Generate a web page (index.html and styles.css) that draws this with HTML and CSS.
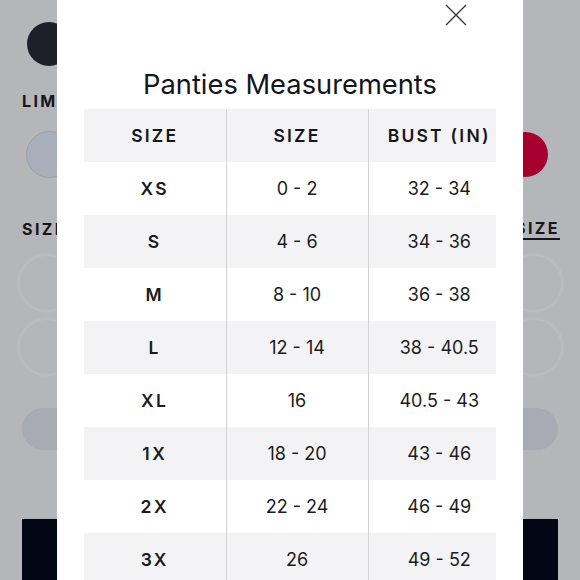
FILE: index.html
```html
<!DOCTYPE html>
<html>
<head>
<meta charset="utf-8">
<link rel="stylesheet" href="styles.css">
</head>
<body>
<div class="page">
  <div class="swatch-row">
    <span class="sw sw-dark"></span>
  </div>
  <div class="label">LIMITED</div>
  <div class="swatch-row two">
    <span class="sw sw-light"></span>
    <span class="sw sw-red"></span>
  </div>
  <div class="label-row">
    <span class="label">SIZE</span>
    <span class="label link">SIZE</span>
  </div>
  <div class="size-row"><span class="sz"></span><span class="sz"></span></div>
  <div class="size-row second"><span class="sz"></span><span class="sz"></span></div>
  <div class="pill"></div>
  <div class="cta"></div>
</div>

<div class="modal">
  <div class="modal-top">
    <svg class="close" width="22" height="22" viewBox="0 0 22 22"><path d="M1 1 L21 21 M21 1 L1 21" stroke="#3a3a3f" stroke-width="1.4" fill="none"/></svg>
  </div>
  <h1 class="title">Panties Measurements</h1>
  <div class="table-wrap">
    <table class="chart">
      <thead>
        <tr><th>SIZE</th><th>SIZE</th><th>BUST (IN)</th></tr>
      </thead>
      <tbody>
        <tr><td class="sz-name">XS</td><td>0 - 2</td><td>32 - 34</td></tr>
        <tr><td class="sz-name">S</td><td>4 - 6</td><td>34 - 36</td></tr>
        <tr><td class="sz-name">M</td><td>8 - 10</td><td>36 - 38</td></tr>
        <tr><td class="sz-name">L</td><td>12 - 14</td><td>38 - 40.5</td></tr>
        <tr><td class="sz-name">XL</td><td>16</td><td>40.5 - 43</td></tr>
        <tr><td class="sz-name">1X</td><td>18 - 20</td><td>43 - 46</td></tr>
        <tr><td class="sz-name">2X</td><td>22 - 24</td><td>46 - 49</td></tr>
        <tr><td class="sz-name">3X</td><td>26</td><td>49 - 52</td></tr>
      </tbody>
    </table>
  </div>
</div>
</body>
</html>
```

FILE: styles.css
```css
html, body {
  margin: 0;
  padding: 0;
  height: 100%;
  overflow: hidden;
}
body {
  background: #b5b6ba;
  font-family: Inter, "Noto Sans", sans-serif;
  color: #16171c;
}
.page {
  padding: 22px 22px 0 22px;
  display: flex;
  flex-direction: column;
}
.swatch-row {
  display: flex;
  justify-content: space-between;
  align-items: center;
  padding-left: 5px;
  height: 44px;
}
.swatch-row.two {
  margin-top: 20px;
  height: 47px;
  padding-left: 4px;
  padding-right: 10px;
}
.sw {
  display: block;
  border-radius: 50%;
  box-sizing: border-box;
}
.sw-dark {
  width: 44px;
  height: 44px;
  background: #1d2028;
}
.sw-light {
  width: 47px;
  height: 47px;
  background: #a9aebb;
  border: 1px solid #9aa0ab;
}
.sw-red {
  width: 45px;
  height: 45px;
  background: #a6002f;
}
.label {
  font-size: 16px;
  line-height: 20px;
  font-weight: 700;
  letter-spacing: 2.4px;
  color: #16171c;
}
.page > .label {
  margin-top: 25px;
}
.label-row {
  margin-top: 41px;
  display: flex;
  justify-content: space-between;
  align-items: flex-start;
}
.link {
  letter-spacing: 2.4px;
  border-bottom: 2px solid #16171c;
  line-height: 19px;
  margin-right: -2px;
}
.size-row {
  margin-top: 14px;
  display: flex;
  justify-content: space-between;
  margin-left: -4px;
  margin-right: -5px;
}
.size-row.second {
  margin-top: 6px;
}
.sz {
  display: block;
  width: 58px;
  height: 58px;
  border-radius: 50%;
  box-sizing: border-box;
  border: 2px solid #bbbcc0;
  background: #b5b6ba;
  box-shadow: 0 0 3px rgba(255,255,255,0.15);
}
.pill {
  margin-top: 32px;
  height: 42px;
  border-radius: 21px;
  background: #a8abb3;
}
.cta {
  margin-top: 69px;
  height: 80px;
  background: #030614;
}

.modal {
  position: fixed;
  top: 0;
  left: 57px;
  width: 466px;
  height: 100%;
  background: #ffffff;
  box-sizing: border-box;
  padding: 4px 27px 0 27px;
}
.modal-top {
  display: flex;
  justify-content: flex-end;
  padding-right: 29px;
  height: 22px;
}
.close {
  display: block;
}
.title {
  margin: 43px 0 0 0;
  text-align: center;
  font-size: 27.3px;
  line-height: 32px;
  font-weight: 400;
  color: #141519;
  letter-spacing: 0;
}
.table-wrap {
  margin-top: 8px;
  width: 412px;
  overflow: hidden;
}
.chart {
  width: 426px;
  border-collapse: collapse;
  table-layout: fixed;
}
.chart th, .chart td {
  height: 53px;
  padding: 0;
  text-align: center;
  vertical-align: middle;
  box-sizing: border-box;
}
.chart th + th, .chart td + td {
  border-left: 1px solid #d3d3d7;
}
.chart thead tr {
  background: #f3f3f5;
}
.chart tbody tr:nth-child(even) {
  background: #f3f3f5;
}
.chart th {
  font-size: 17.5px;
  font-weight: 600;
  letter-spacing: 2.2px;
  color: #16171c;
}
.chart td {
  font-size: 18px;
  font-weight: 400;
  color: #1a1b20;
}
.chart td.sz-name {
  font-weight: 600;
  letter-spacing: 2.4px;
  font-size: 17.5px;
}
```
